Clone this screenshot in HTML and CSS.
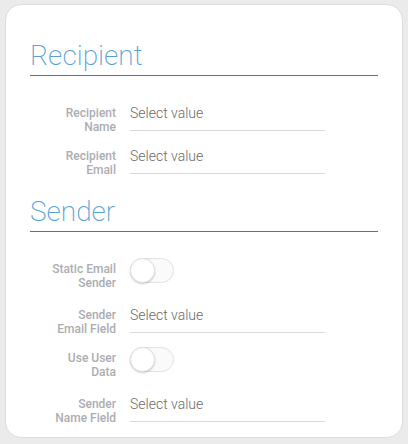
FILE: index.html
```html
<!DOCTYPE html>
<html lang="en">
<head>
    <meta charset="UTF-8">
    <meta name="viewport" content="width=device-width, initial-scale=1.0">
    <title>Email Settings</title>
    <link rel="stylesheet" href="styles.css">
</head>
<body>
    <div class="card">
        <h2 class="section-title first">Recipient</h2>
        <div class="row input-row">
            <label class="row-label">Recipient<br>Name</label>
            <div class="field">Select value</div>
        </div>
        <div class="row input-row">
            <label class="row-label">Recipient<br>Email</label>
            <div class="field">Select value</div>
        </div>

        <h2 class="section-title">Sender</h2>
        <div class="row toggle-row">
            <label class="row-label">Static Email<br>Sender</label>
            <div class="toggle"><span class="knob"></span></div>
        </div>
        <div class="row input-row">
            <label class="row-label">Sender<br>Email Field</label>
            <div class="field">Select value</div>
        </div>
        <div class="row toggle-row">
            <label class="row-label">Use User<br>Data</label>
            <div class="toggle"><span class="knob"></span></div>
        </div>
        <div class="row input-row last">
            <label class="row-label">Sender<br>Name Field</label>
            <div class="field">Select value</div>
        </div>
    </div>
</body>
</html>
```

FILE: styles.css
```css
body {
    margin: 0;
    background-color: #ebebeb;
    font-family: Roboto, "Liberation Sans", sans-serif;
}
.card {
    margin: 4px 5px 0 5px;
    width: 398px;
    box-sizing: border-box;
    background-color: #fff;
    border: 1px solid #dcdcdc;
    border-radius: 16px;
    padding: 1px 24px 12px 24px;
}
.section-title {
    margin: 19px 0 30px 0;
    padding-bottom: 3px;
    font-size: 28px;
    line-height: 32px;
    font-weight: 200;
    color: #5aa2d6;
    border-bottom: 1px solid #2b86ac;
}
.section-title.first {
    margin-top: 34px;
}
.row {
    display: flex;
    align-items: flex-start;
}
.input-row {
    margin-bottom: 15px;
}
.toggle-row {
    margin-bottom: 18px;
}
.row.last {
    margin-bottom: 0;
}
.row-label {
    width: 86px;
    flex: none;
    text-align: right;
    font-size: 12px;
    line-height: 14px;
    font-weight: 500;
    color: #acacb2;
}
.field {
    margin-left: 14px;
    margin-top: -1px;
    width: 195px;
    font-size: 14px;
    line-height: 16px;
    font-weight: 300;
    color: #6a6a6a;
    padding-bottom: 9px;
    border-bottom: 1px solid #dadada;
}
.toggle {
    position: relative;
    margin-left: 14px;
    margin-top: -4px;
    width: 44px;
    height: 25px;
    box-sizing: border-box;
    border: 1px solid #e2e2e2;
    border-radius: 13px;
    background-color: #fafafa;
}
.knob {
    position: absolute;
    left: -1px;
    top: -1px;
    width: 25px;
    height: 25px;
    box-sizing: border-box;
    border-radius: 50%;
    background-color: #fff;
    border: 1px solid #e0e0e0;
    box-shadow: 0 1px 2px rgba(0, 0, 0, 0.2);
}
```
